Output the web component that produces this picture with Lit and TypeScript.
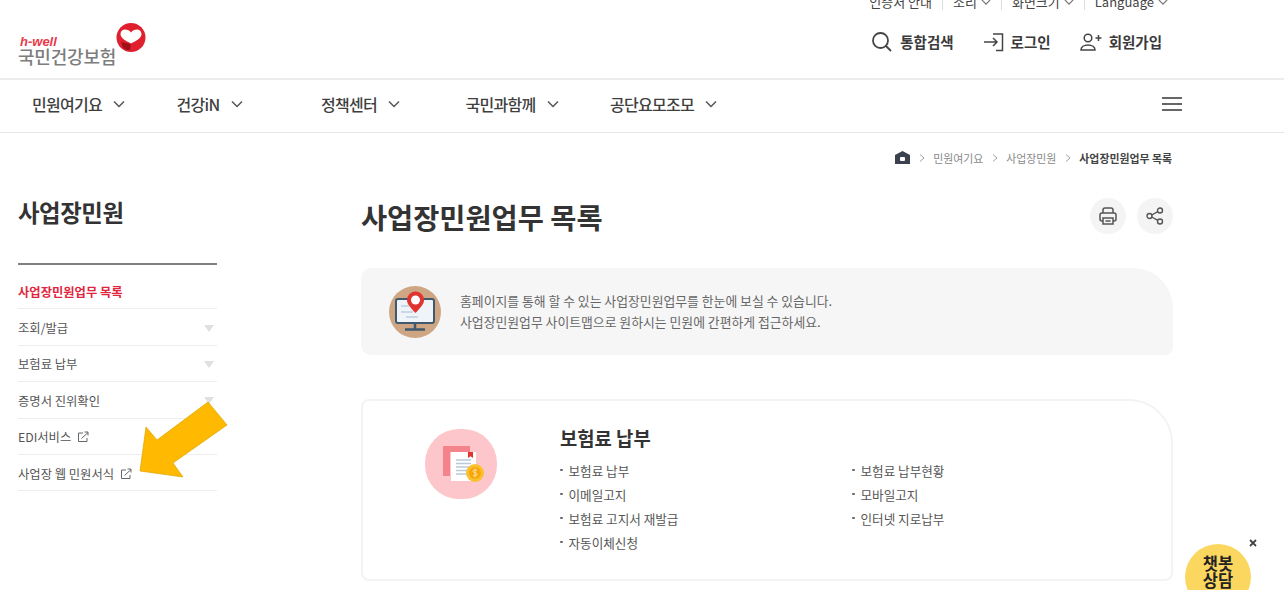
import { LitElement, html, css, svg } from "lit";
import { customElement } from "lit/decorators.js";

const chevron = (size = 12) => html`<svg class="chev" width=${size} height=${size} viewBox="0 0 12 12" fill="none" stroke="currentColor" stroke-width="1.5"><path d="M1 3.5l5 5 5-5" /></svg>`;

const external = html`<svg class="ext" width="12" height="12" viewBox="0 0 12 12" fill="none" stroke="#666" stroke-width="1"><path d="M6 2H1.500v8.500H10V7" /><path d="M4.500 7.500L11 1.500M7.500 1h3.500v3.500" /></svg>`;

const crumbSep = html`<svg width="6" height="8" viewBox="0 0 6 8" fill="none" stroke="#999" stroke-width="0.9"><path d="M1 .5L5 4 1 7.500" /></svg>`;

const navItems = ["민원여기요", "건강iN", "정책센터", "국민과함께", "공단요모조모"];

const sideItems = [
  { label: "사업장민원업무 목록", active: true },
  { label: "조회/발급", caret: true },
  { label: "보험료 납부", caret: true },
  { label: "증명서 진위확인", caret: true },
  { label: "EDI서비스", ext: true },
  { label: "사업장 웹 민원서식", ext: true },
];

const leftLinks = ["보험료 납부", "이메일고지", "보험료 고지서 재발급", "자동이체신청"];
const rightLinks = ["보험료 납부현황", "모바일고지", "인터넷 지로납부"];

@customElement("app-root")
export class AppRoot extends LitElement {
  static styles = css`
    :host {
      display: block;
      position: relative;
      width: 1284px;
      height: 590px;
      overflow: hidden;
      background: #fff;
      color: #333;
      font-family: "Noto Sans CJK KR", "Noto Sans", sans-serif;
    }

    header {
      height: 78px;
      border-bottom: 2px solid #ececec;
    }

    .util {
      height: 10px;
      padding-right: 106px;
      display: flex;
      justify-content: flex-end;
      align-items: flex-end;
      font-size: 13px;
      line-height: 16px;
      color: #444;
    }

    .util span {
      display: flex;
      align-items: center;
      gap: 4px;
      padding: 0 10px;
      border-left: 1px solid #ddd;
    }

    .util span:first-child {
      border-left: none;
    }

    .util .chev {
      color: #777;
    }

    .head-main {
      height: 63px;
      padding: 0 122px 0 18px;
      display: flex;
      justify-content: space-between;
      align-items: center;
    }

    .logo {
      align-self: flex-start;
      margin-top: 13px;
      display: flex;
      align-items: flex-start;
    }

    .logo-text {
      display: flex;
      flex-direction: column;
      margin-top: 13px;
    }

    .logo-en {
      margin-left: 2px;
      font-family: "Liberation Sans", sans-serif;
      font-size: 13px;
      line-height: 12px;
      font-weight: 700;
      font-style: italic;
      color: #e8394a;
    }

    .logo-ko {
      font-size: 18px;
      line-height: 17px;
      font-weight: 500;
      letter-spacing: -0.2px;
      color: #7d7d7d;
    }

    .logo svg {
      margin-left: -1px;
    }

    .actions {
      display: flex;
      gap: 29px;
      font-size: 14.5px;
      font-weight: 700;
      color: #3a3a3a;
    }

    .actions a {
      display: flex;
      align-items: center;
      gap: 7px;
    }

    .actions a:first-child {
      gap: 8px;
    }

    nav {
      height: 53px;
      padding: 0 102px 4px 0;
      box-sizing: border-box;
      border-bottom: 1px solid #e6e6e6;
      display: flex;
      align-items: center;
      font-size: 16px;
      font-weight: 500;
      color: #3f3f3f;
    }

    .nav-item {
      width: 144.5px;
      padding-left: 32px;
      box-sizing: border-box;
      display: flex;
      align-items: center;
      gap: 11px;
      letter-spacing: -0.7px;
      white-space: nowrap;
    }

    .nav-item .chev {
      color: #555;
    }

    .burger {
      margin-left: auto;
    }

    .content {
      display: flex;
      padding: 0 111px 0 18px;
    }

    aside {
      width: 199px;
      margin-right: 144px;
      flex: none;
    }

    aside h2 {
      margin: 61px 0 33px;
      font-size: 23.4px;
      line-height: 36px;
      font-weight: 700;
      letter-spacing: -0.4px;
      color: #333;
    }

    aside ul {
      margin: 0;
      padding: 8px 0 0;
      list-style: none;
      border-top: 2px solid #808080;
    }

    aside li {
      height: 36.4px;
      box-sizing: border-box;
      padding-top: 2px;
      border-bottom: 1px solid #eee;
      display: flex;
      align-items: center;
      justify-content: space-between;
      font-size: 12.3px;
      color: #555;
    }

    aside li.active {
      color: #e0263f;
      font-weight: 700;
    }

    aside li .with-ext {
      display: flex;
      align-items: center;
      gap: 6px;
    }

    .caret {
      margin-right: 3px;
      width: 0;
      height: 0;
      border-left: 5px solid transparent;
      border-right: 5px solid transparent;
      border-top: 7px solid #e0e0e0;
    }

    main {
      flex: 1;
    }

    .crumbs {
      height: 49px;
      padding-right: 1px;
      display: flex;
      justify-content: flex-end;
      align-items: center;
      gap: 8.5px;
      font-size: 10.9px;
      color: #8a8a8a;
    }

    .crumbs b {
      color: #444;
      font-weight: 700;
    }

    .title-row {
      height: 36px;
      margin-top: 16px;
      display: flex;
      align-items: center;
      justify-content: space-between;
    }

    h1 {
      margin: 0;
      font-size: 28.4px;
      font-weight: 700;
      color: #333;
    }

    .tools {
      display: flex;
      gap: 11px;
    }

    .tool {
      width: 36px;
      height: 36px;
      border-radius: 50%;
      background: #f4f4f4;
      display: flex;
      align-items: center;
      justify-content: center;
    }

    .notice {
      height: 87px;
      margin-top: 34px;
      padding-left: 27px;
      box-sizing: border-box;
      border-radius: 10px 40px 8px 10px;
      background: #f6f6f6;
      display: flex;
      align-items: center;
      gap: 18px;
      font-size: 12.85px;
      line-height: 21px;
      color: #666;
    }

    .notice-text {
      margin-bottom: 2px;
    }

    .card {
      height: 182px;
      margin-top: 44px;
      box-sizing: border-box;
      border: 2px solid #f3f3f3;
      border-radius: 8px 44px 8px 8px;
      display: flex;
    }

    .card-icon {
      width: 72px;
      height: 70px;
      margin: 28px 63px 0 62px;
      border-radius: 34px;
      background: #fdc6ca;
      display: flex;
      align-items: center;
      justify-content: center;
    }

    .card-body {
      flex: 1;
      margin-top: 24px;
    }

    .card-body h3 {
      margin: 0 0 7px;
      font-size: 18.8px;
      line-height: 26px;
      font-weight: 700;
      color: #333;
    }

    .links {
      display: grid;
      grid-template-columns: 292px 1fr;
    }

    .links ul {
      margin: 0;
      padding: 0;
      list-style: none;
    }

    .links li {
      height: 24px;
      display: flex;
      align-items: center;
      gap: 6px;
      font-size: 12.6px;
      color: #555;
    }

    .links li::before {
      content: "";
      width: 2.5px;
      height: 2.5px;
      background: #666;
      border-radius: 50%;
    }

    .arrow {
      position: absolute;
      left: 136px;
      top: 398px;
    }

    .chat {
      position: absolute;
      left: 1185px;
      top: 544px;
      width: 66px;
      height: 66px;
      padding-top: 11px;
      box-sizing: border-box;
      border-radius: 50%;
      background: #fcd75f;
      text-align: center;
      font-size: 16.5px;
      line-height: 17px;
      font-weight: 700;
      color: #222;
    }

    .chat-close {
      position: absolute;
      left: 1249px;
      top: 539px;
    }
  `;

  renderSideItem(item: { label: string; active?: boolean; caret?: boolean; ext?: boolean }) {
    return html`<li class=${item.active ? "active" : ""}>
      ${item.ext ? html`<span class="with-ext">${item.label} ${external}</span>` : html`<span>${item.label}</span>`}
      ${item.caret ? html`<span class="caret"></span>` : ""}
    </li>`;
  }

  render() {
    return html`
      <header>
        <div class="util">
          <span>인증서 안내</span>
          <span>소리 ${chevron(10)}</span>
          <span>화면크기 ${chevron(10)}</span>
          <span>Language ${chevron(10)}</span>
        </div>
        <div class="head-main">
          <div class="logo">
            <div class="logo-text">
              <span class="logo-en">h-well</span>
              <span class="logo-ko">국민건강보험</span>
            </div>
            <svg width="32" height="31" viewBox="0 0 32 31">
              <circle cx="16" cy="14.500" r="14.500" fill="#e0202e" />
              <path d="M6 19l10 2-1 6c-3 .3-5-.5-7-2.500z" fill="#a01019" />
              <path d="M16 20.500C9.500 17.500 5.500 14.500 5.500 11c0-2.500 2-4.500 4.500-4.500 2.500 0 4.800 1.200 6 3 1.200-1.800 3.500-3 6-3 2.500 0 4.500 2 4.500 4.500 0 3.500-4 6.500-10.500 9.500z" fill="#fff" />
            </svg>
          </div>
          <div class="actions">
            <a>
              <svg width="21" height="21" viewBox="0 0 21 21" fill="none" stroke="#444" stroke-width="1.800"><circle cx="9.500" cy="9.500" r="7.500" /><path d="M15 15l5 5" /></svg>
              통합검색
            </a>
            <a>
              <svg width="21" height="20" viewBox="0 0 21 20" fill="none" stroke="#444" stroke-width="1.500"><path d="M10 2h9.500v16.500H13" /><path d="M1 10h13M10 6l4 4-4 4" /></svg>
              로그인
            </a>
            <a>
              <svg width="22" height="18" viewBox="0 0 22 18" fill="none" stroke="#444" stroke-width="1.500"><circle cx="8" cy="5" r="3.800" /><path d="M1 17c0-3 3-5 7-5s7 2 7 5z" /><path d="M15.500 5h6M18.500 2v6" /></svg>
              회원가입
            </a>
          </div>
        </div>
      </header>

      <nav>
        ${navItems.map((n) => html`<div class="nav-item">${n} ${chevron()}</div>`)}
        <svg class="burger" width="20" height="16" viewBox="0 0 20 16" stroke="#666" stroke-width="2"><path d="M0 2h20M0 8h20M0 14h20" /></svg>
      </nav>

      <div class="content">
        <aside>
          <h2>사업장민원</h2>
          <ul>${sideItems.map((i) => this.renderSideItem(i))}</ul>
        </aside>

        <main>
          <div class="crumbs">
            <svg width="15" height="13" viewBox="0 0 15 13"><path d="M7.500 0L15 4v9H0V4z" fill="#3c4150" /><rect x="5" y="6" width="5" height="4" rx="1" fill="#fff" /></svg>
            ${crumbSep}<span>민원여기요</span>
            ${crumbSep}<span>사업장민원</span>
            ${crumbSep}<b>사업장민원업무 목록</b>
          </div>

          <div class="title-row">
            <h1>사업장민원업무 목록</h1>
            <div class="tools">
              <div class="tool">
                <svg width="20" height="20" viewBox="0 0 20 20" fill="none" stroke="#555" stroke-width="1.500"><path d="M5 7V4a2 2 0 0 1 2-2h6a2 2 0 0 1 2 2v3" /><path d="M5 15H4a2 2 0 0 1-2-2V9a2 2 0 0 1 2-2h12a2 2 0 0 1 2 2v4a2 2 0 0 1-2 2h-1" /><path d="M5 12h10v6H5zM7.500 15h5" /></svg>
              </div>
              <div class="tool">
                <svg width="18" height="18" viewBox="0 0 18 18" fill="none" stroke="#555" stroke-width="1.400"><circle cx="14" cy="3.500" r="2.500" /><circle cx="14" cy="14.500" r="2.500" /><circle cx="3.500" cy="9" r="2.500" /><path d="M5.800 8l6-3.300M5.800 10l6 3.300" /></svg>
              </div>
            </div>
          </div>

          <div class="notice">
            <svg width="54" height="52" viewBox="0 0 54 52">
              <circle cx="27" cy="26" r="26" fill="#cfa684" />
              <rect x="8" y="13" width="38" height="24" rx="2" fill="#eef4f8" stroke="#3f5a6e" stroke-width="2" />
              <path d="M27 37v6M17 43.500h20" stroke="#3f5a6e" stroke-width="2.500" fill="none" />
              <path d="M13 20h8M13 26h12M18 31h12" stroke="#bcd0de" stroke-width="1.500" />
              <path d="M27.500 27c-5.500-6-8.500-9-8.500-13a8.500 8.500 0 0 1 17 0c0 4-3 7-8.500 13z" fill="#e0342f" />
              <circle cx="27.500" cy="14" r="4.500" fill="#fff" />
            </svg>
            <div class="notice-text">
              홈페이지를 통해 할 수 있는 사업장민원업무를 한눈에 보실 수 있습니다.<br />
              사업장민원업무 사이트맵으로 원하시는 민원에 간편하게 접근하세요.
            </div>
          </div>

          <section class="card">
            <div class="card-icon">
              <svg width="46" height="40" viewBox="0 0 46 40">
                <path d="M5 2h27v6H12v24H5z" fill="#f4838c" />
                <rect x="13" y="8" width="25" height="29" fill="#fff" />
                <path d="M30 8h5v6l-2.500-1.800L30 14z" fill="#e0342f" />
                <path d="M18 16h15M18 19.500h15M18 23h15M18 26.500h15M18 30h11" stroke="#b9c9dc" stroke-width="1.500" />
                <circle cx="37" cy="29" r="9" fill="#fbc02d" />
                <circle cx="37" cy="29" r="6" fill="#f7a70d" />
                <path d="M39 26.500c-1-1-4-1-4 .8s4 1 4 3-3 1.800-4 .8M37 24.500v9" stroke="#fde39a" stroke-width="1" fill="none" />
              </svg>
            </div>
            <div class="card-body">
              <h3>보험료 납부</h3>
              <div class="links">
                <ul>${leftLinks.map((l) => html`<li>${l}</li>`)}</ul>
                <ul>${rightLinks.map((l) => html`<li>${l}</li>`)}</ul>
              </div>
            </div>
          </section>
        </main>
      </div>

      <svg class="arrow" width="94" height="84" viewBox="136 398 94 84">
        ${svg`<path d="M140 471L146 427L157 440L208 402L227 425L173 463L183 477z" fill="#ffb900" stroke="#dba400" stroke-width="0.7" />`}
      </svg>

      <div class="chat">챗봇<br />상담</div>
      <svg class="chat-close" width="8" height="8" viewBox="0 0 8 8" stroke="#444" stroke-width="1.800"><path d="M1 1l6 6M7 1l-6 6" /></svg>
    `;
  }
}
